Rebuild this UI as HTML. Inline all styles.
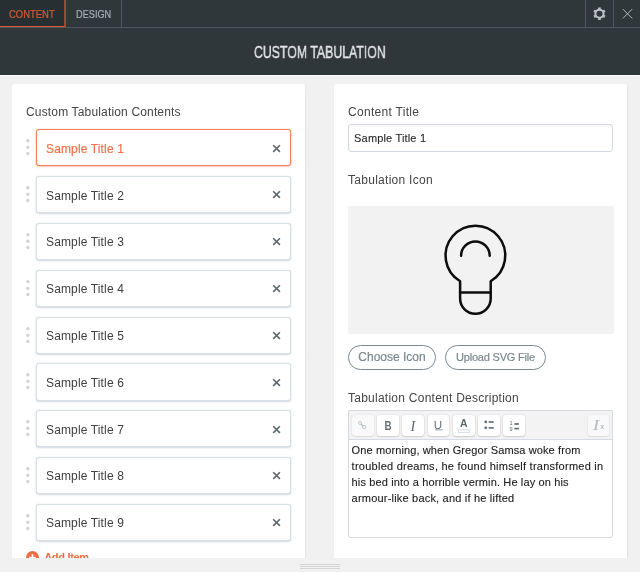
<!DOCTYPE html>
<html lang="en">
<head>
<meta charset="utf-8">
<title>Custom Tabulation</title>
<style>
*{box-sizing:border-box;margin:0;padding:0}
html,body{width:640px;height:572px;overflow:hidden;background:#f1f1f1;font-family:"Liberation Sans",sans-serif;color:#3d4449}
#wrap{position:absolute;left:0;top:0;width:640px;height:572px;overflow:hidden;will-change:transform}
.abs{position:absolute}
#top{position:absolute;left:0;top:0;width:640px;height:75px;background:#30373b}
#top .line{position:absolute;left:0;top:27px;width:640px;height:1px;background:#4d585d}
#whiteline{position:absolute;left:0;top:75px;width:640px;height:1px;background:#fbfbfb}
.tab{position:absolute;top:0;height:27px;font-size:11px;line-height:29px;overflow:hidden;white-space:nowrap}
.tab span{display:inline-block;transform-origin:0 50%;-webkit-text-stroke:.2px currentColor}
#tab1{left:0;width:66px;background:#282f33;border-right:2px solid #9a4932;border-bottom:1px solid #dc572e;color:#d55a31}
#tab2{left:66px;width:56px;border-right:1px solid #4d585d;color:#a7afb4}
.vsep{position:absolute;top:0;width:1px;height:27px;background:#4d585d}
#title{position:absolute;left:0;top:28px;width:640px;height:47px;color:#e4e6e7;font-size:16px;line-height:47px;white-space:nowrap}
#title span{position:absolute;left:254.1px;top:.5px;-webkit-text-stroke:.35px #e4e6e7;display:inline-block;transform-origin:0 50%;transform:scaleX(.769)}
.card{position:absolute;top:84px;width:293px;background:#fff;border-radius:3px;box-shadow:1px 1px 2px rgba(0,0,0,.06)}
.lbl{position:absolute;font-size:12px;line-height:16px;white-space:nowrap;color:#454545}
.item{position:absolute;left:35.5px;width:255.5px;height:37.2px;border:1px solid #dae1e5;border-radius:3px;background:#fff;box-shadow:0 0 1px rgba(150,170,185,.5),0 1px 2px rgba(150,170,185,.4)}
.item.on{border-color:#f67d57;box-shadow:0 0 1px rgba(246,125,87,.8),0 1px 2px rgba(246,125,87,.35)}
.item .t{position:absolute;left:9.5px;top:10.4px;font-size:12px;line-height:16px;letter-spacing:.14px;white-space:nowrap;color:#404040}
.item.on .t{color:#f4734c;-webkit-text-stroke:.2px #f4734c}
.item svg{position:absolute;left:235.6px;top:13.3px}
.dots{position:absolute;left:26.2px;width:4px}
.dots i{position:absolute;left:0;width:3.4px;height:3.4px;border-radius:50%;background:#d4d4d4}
#footer{position:absolute;left:0;top:558px;width:640px;height:14px;background:#f1f1f1}
#footer i{position:absolute;left:300px;width:40px;height:1px;background:#d4d4d4}
.pill{position:absolute;top:344.6px;height:25.3px;border:1px solid #7a8991;border-radius:13px;font-size:12px;line-height:23.8px;color:#7b8991;-webkit-text-stroke:.2px #7b8991;text-align:center;white-space:nowrap;background:#fff}
#tb{position:absolute;left:348px;top:410px;width:265px;height:30px;background:#f3f3f3;border:1px solid #d5dbe0;border-radius:1px 1px 0 0}
.b{position:absolute;top:3.8px;width:21.8px;height:21px;border-radius:3px;background:#fff;box-shadow:0 0 2px rgba(0,0,0,.14),0 1px 1.5px rgba(0,0,0,.12);color:#5d6970;text-align:center}
.b.dis{background:#f9f9f9;box-shadow:0 0 2px rgba(0,0,0,.09),0 1px 1.5px rgba(0,0,0,.07);color:#b5bcc1}
.b svg{position:absolute;left:0;top:0}
.b span{position:absolute;left:0;width:22px;text-align:center;white-space:nowrap}
#ta{position:absolute;left:348px;top:439px;width:265px;height:99px;background:#fff;border:1px solid #d5dbe0;border-radius:0 0 3px 3px}
#ta div{position:absolute;left:2.6px;font-size:11px;line-height:16px;white-space:nowrap;color:#222;-webkit-text-stroke:.12px #222}
</style>
</head>
<body>
<div id="wrap">
<div id="top">
  <div class="tab" id="tab1"><span style="margin-left:9.3px;transform:scaleX(.86)">CONTENT</span></div>
  <div class="tab" id="tab2"><span style="margin-left:9.5px;transform:scaleX(.835)">DESIGN</span></div>
  <div class="vsep" style="left:585px"></div>
  <div class="vsep" style="left:613px"></div>
  <div class="line"></div>
  <svg class="abs" style="left:592px;top:6px" width="15" height="16" viewBox="0 0 15 16">
    <g fill="none" stroke="#bcc3c7">
      <circle cx="7.45" cy="7.75" r="4.05" stroke-width="2"/>
      <path stroke-width="2.7" d="M7.45 3.35L7.45 1.55M3.64 5.55L2.08 4.65M3.64 9.95L2.08 10.85M7.45 12.15L7.45 13.95M11.26 9.95L12.82 10.85M11.26 5.55L12.82 4.65"/>
    </g>
  </svg>
  <svg class="abs" style="left:622px;top:8px" width="12" height="12" viewBox="0 0 12 12">
    <path d="M0.9 1.1L10.2 10.4M10.2 1.1L0.9 10.4" stroke="#b4bbbf" stroke-width="1" fill="none"/>
  </svg>
  <div id="title"><span>CUSTOM TABULATION</span></div>
</div>
<div id="whiteline"></div>

<!-- left card -->
<div class="card" style="left:12px;height:480px"></div>
<div class="lbl" style="left:26px;top:104px;letter-spacing:.16px">Custom Tabulation Contents</div>

<svg class="abs" style="left:24px;top:129px" width="8" height="38" viewBox="0 0 8 38"><g fill="#d5d5d5"><circle cx="3.85" cy="11.8" r="1.75"/><circle cx="3.85" cy="18.2" r="1.75"/><circle cx="3.85" cy="24.6" r="1.75"/></g></svg>
<div class="item on" style="top:129.30px"><div class="t">Sample Title 1</div><svg width="9" height="9" viewBox="0 0 9 9"><path d="M1.2 1.2L7.9 7.9M7.9 1.2L1.2 7.9" stroke="#5b6870" stroke-width="1.6" fill="none"/></svg></div>
<svg class="abs" style="left:24px;top:176px" width="8" height="38" viewBox="0 0 8 38"><g fill="#d5d5d5"><circle cx="3.85" cy="11.8" r="1.75"/><circle cx="3.85" cy="18.2" r="1.75"/><circle cx="3.85" cy="24.6" r="1.75"/></g></svg>
<div class="item" style="top:176.12px"><div class="t">Sample Title 2</div><svg width="9" height="9" viewBox="0 0 9 9"><path d="M1.2 1.2L7.9 7.9M7.9 1.2L1.2 7.9" stroke="#5b6870" stroke-width="1.6" fill="none"/></svg></div>
<svg class="abs" style="left:24px;top:223px" width="8" height="38" viewBox="0 0 8 38"><g fill="#d5d5d5"><circle cx="3.85" cy="11.8" r="1.75"/><circle cx="3.85" cy="18.2" r="1.75"/><circle cx="3.85" cy="24.6" r="1.75"/></g></svg>
<div class="item" style="top:222.94px"><div class="t">Sample Title 3</div><svg width="9" height="9" viewBox="0 0 9 9"><path d="M1.2 1.2L7.9 7.9M7.9 1.2L1.2 7.9" stroke="#5b6870" stroke-width="1.6" fill="none"/></svg></div>
<svg class="abs" style="left:24px;top:270px" width="8" height="38" viewBox="0 0 8 38"><g fill="#d5d5d5"><circle cx="3.85" cy="11.8" r="1.75"/><circle cx="3.85" cy="18.2" r="1.75"/><circle cx="3.85" cy="24.6" r="1.75"/></g></svg>
<div class="item" style="top:269.76px"><div class="t">Sample Title 4</div><svg width="9" height="9" viewBox="0 0 9 9"><path d="M1.2 1.2L7.9 7.9M7.9 1.2L1.2 7.9" stroke="#5b6870" stroke-width="1.6" fill="none"/></svg></div>
<svg class="abs" style="left:24px;top:317px" width="8" height="38" viewBox="0 0 8 38"><g fill="#d5d5d5"><circle cx="3.85" cy="11.8" r="1.75"/><circle cx="3.85" cy="18.2" r="1.75"/><circle cx="3.85" cy="24.6" r="1.75"/></g></svg>
<div class="item" style="top:316.58px"><div class="t">Sample Title 5</div><svg width="9" height="9" viewBox="0 0 9 9"><path d="M1.2 1.2L7.9 7.9M7.9 1.2L1.2 7.9" stroke="#5b6870" stroke-width="1.6" fill="none"/></svg></div>
<svg class="abs" style="left:24px;top:363px" width="8" height="38" viewBox="0 0 8 38"><g fill="#d5d5d5"><circle cx="3.85" cy="11.8" r="1.75"/><circle cx="3.85" cy="18.2" r="1.75"/><circle cx="3.85" cy="24.6" r="1.75"/></g></svg>
<div class="item" style="top:363.40px"><div class="t">Sample Title 6</div><svg width="9" height="9" viewBox="0 0 9 9"><path d="M1.2 1.2L7.9 7.9M7.9 1.2L1.2 7.9" stroke="#5b6870" stroke-width="1.6" fill="none"/></svg></div>
<svg class="abs" style="left:24px;top:410px" width="8" height="38" viewBox="0 0 8 38"><g fill="#d5d5d5"><circle cx="3.85" cy="11.8" r="1.75"/><circle cx="3.85" cy="18.2" r="1.75"/><circle cx="3.85" cy="24.6" r="1.75"/></g></svg>
<div class="item" style="top:410.22px"><div class="t">Sample Title 7</div><svg width="9" height="9" viewBox="0 0 9 9"><path d="M1.2 1.2L7.9 7.9M7.9 1.2L1.2 7.9" stroke="#5b6870" stroke-width="1.6" fill="none"/></svg></div>
<svg class="abs" style="left:24px;top:457px" width="8" height="38" viewBox="0 0 8 38"><g fill="#d5d5d5"><circle cx="3.85" cy="11.8" r="1.75"/><circle cx="3.85" cy="18.2" r="1.75"/><circle cx="3.85" cy="24.6" r="1.75"/></g></svg>
<div class="item" style="top:457.04px"><div class="t">Sample Title 8</div><svg width="9" height="9" viewBox="0 0 9 9"><path d="M1.2 1.2L7.9 7.9M7.9 1.2L1.2 7.9" stroke="#5b6870" stroke-width="1.6" fill="none"/></svg></div>
<svg class="abs" style="left:24px;top:504px" width="8" height="38" viewBox="0 0 8 38"><g fill="#d5d5d5"><circle cx="3.85" cy="11.8" r="1.75"/><circle cx="3.85" cy="18.2" r="1.75"/><circle cx="3.85" cy="24.6" r="1.75"/></g></svg>
<div class="item" style="top:503.86px"><div class="t">Sample Title 9</div><svg width="9" height="9" viewBox="0 0 9 9"><path d="M1.2 1.2L7.9 7.9M7.9 1.2L1.2 7.9" stroke="#5b6870" stroke-width="1.6" fill="none"/></svg></div>
<!-- add item (clipped by footer) -->
<svg class="abs" style="left:26px;top:551px" width="13" height="13" viewBox="0 0 13 13"><circle cx="6.5" cy="6.5" r="6.5" fill="#f16b43"/><path d="M6.5 3.2v6.6M3.2 6.5h6.6" stroke="#fff" stroke-width="1.7" fill="none"/></svg>
<div class="lbl" style="left:44.2px;top:549.2px;color:#f16b43;font-weight:bold;font-size:11px;letter-spacing:-.3px">Add Item</div>

<!-- right card -->
<div class="card" style="left:334px;height:480px"></div>
<div class="lbl" style="left:348px;top:104px;letter-spacing:.3px">Content Title</div>
<div class="abs" style="left:348px;top:124.2px;width:265px;height:27.8px;border:1px solid #d3d9de;border-radius:3px;background:#fff;box-shadow:inset 0 1px 2px rgba(0,0,0,.05)"><div class="abs" style="left:5.1px;top:4.8px;font-size:11px;line-height:16px;letter-spacing:.17px;white-space:nowrap;color:#2a2a2a;-webkit-text-stroke:.12px #2a2a2a">Sample Title 1</div></div>
<div class="lbl" style="left:348px;top:171.5px;letter-spacing:.28px">Tabulation Icon</div>
<div class="abs" style="left:348px;top:206px;width:265.8px;height:128.3px;background:#f2f2f2;border-radius:2px"></div>
<svg class="abs" style="left:440px;top:220px" width="70" height="100" viewBox="440 220 70 100">
  <g fill="none" stroke="#0d0d0d" stroke-width="2.5" stroke-linecap="round" stroke-linejoin="round">
    <path d="M460.10 281.23 A29.85 29.85 0 1 1 490.70 281.23 V298.55 A15.3 15.3 0 0 1 460.10 298.55 Z"/>
    <path d="M460.10 292.6 H490.70"/>
    <path d="M461.10 255.8 A14.3 14.3 0 0 1 489.70 255.8"/>
  </g>
</svg>
<div class="pill" style="left:348px;width:88px"><span style="letter-spacing:0">Choose Icon</span></div>
<div class="pill" style="left:445px;width:101px"><span style="font-size:11px;letter-spacing:-.2px">Upload SVG File</span></div>
<div class="lbl" style="left:348px;top:389.5px;letter-spacing:.25px">Tabulation Content Description</div>

<div id="tb">
  <div class="b dis" style="left:2.90px"><svg width="22" height="22" viewBox="0 0 22 22"><g fill="none" stroke="#bcc3c7" stroke-width=".9"><circle cx="8" cy="7.9" r="1.5"/><circle cx="12.2" cy="12.2" r="1.6"/><path d="M9 9L11.1 11.1" stroke-width="1.6"/></g></svg></div>
  <div class="b" style="left:28.15px"><span style="top:3px;font-size:12px;line-height:16px;font-weight:bold;color:#65737b;transform:scaleX(.82)">B</span></div>
  <div class="b" style="left:53.40px"><span style="top:3.2px;left:-.5px;font-family:'Liberation Serif',serif;font-style:italic;font-size:14.5px;line-height:16px">I</span></div>
  <div class="b" style="left:78.65px"><span style="top:2.2px;left:-.2px;font-size:11px;line-height:16px;color:#65737b;transform:scaleX(1.06)">U</span><svg width="22" height="22" viewBox="0 0 22 22"><rect x="7" y="14.3" width="7.6" height="1" fill="#96a1a8"/></svg></div>
  <div class="b" style="left:103.90px"><span style="top:.2px;left:-.2px;font-size:10.5px;line-height:16px;font-weight:bold">A</span><svg width="22" height="22" viewBox="0 0 22 22"><rect x="5.4" y="14.9" width="11.4" height="2.5" fill="#fff" stroke="#d9dde0" stroke-width="1"/></svg></div>
  <div class="b" style="left:129.15px"><svg width="22" height="22" viewBox="0 0 22 22"><g fill="#5d6970"><circle cx="7.7" cy="6.95" r="1.35"/><circle cx="7.7" cy="12.85" r="1.35"/><rect x="10.7" y="6.2" width="5" height="1.6"/><rect x="10.7" y="12.1" width="5" height="1.6"/></g></svg></div>
  <div class="b" style="left:154.40px"><svg width="22" height="22" viewBox="0 0 22 22"><g fill="#5d6970"><rect x="11.4" y="8.2" width="4.5" height="1.6"/><rect x="11.4" y="12.8" width="4.5" height="1.6"/></g><text x="6.6" y="10.4" font-family="Liberation Sans, sans-serif" font-size="5.5" fill="#5d6970">1</text><text x="6.4" y="16" font-family="Liberation Sans, sans-serif" font-size="5.5" fill="#5d6970">9</text></svg></div>
  <div class="b dis" style="left:238.6px"><span style="top:2.7px;left:-2.5px;font-family:'Liberation Serif',serif;font-style:italic;font-size:15px;line-height:16px;transform:scaleX(1.3)">I</span><span style="top:7.6px;left:3.6px;font-size:7px;line-height:10px;font-weight:bold">x</span></div>
</div>
<div id="ta">
<div style="top:1.7px;letter-spacing:0.111px">One morning, when Gregor Samsa woke from</div>
<div style="top:17.7px;letter-spacing:0.253px">troubled dreams, he found himself transformed in</div>
<div style="top:33.7px;letter-spacing:0.137px">his bed into a horrible vermin. He lay on his</div>
<div style="top:49.7px;letter-spacing:0.200px">armour-like back, and if he lifted</div>
</div>

<div id="footer"><i style="top:6px"></i><i style="top:8px"></i><i style="top:10px"></i></div>
</div>
</body>
</html>
